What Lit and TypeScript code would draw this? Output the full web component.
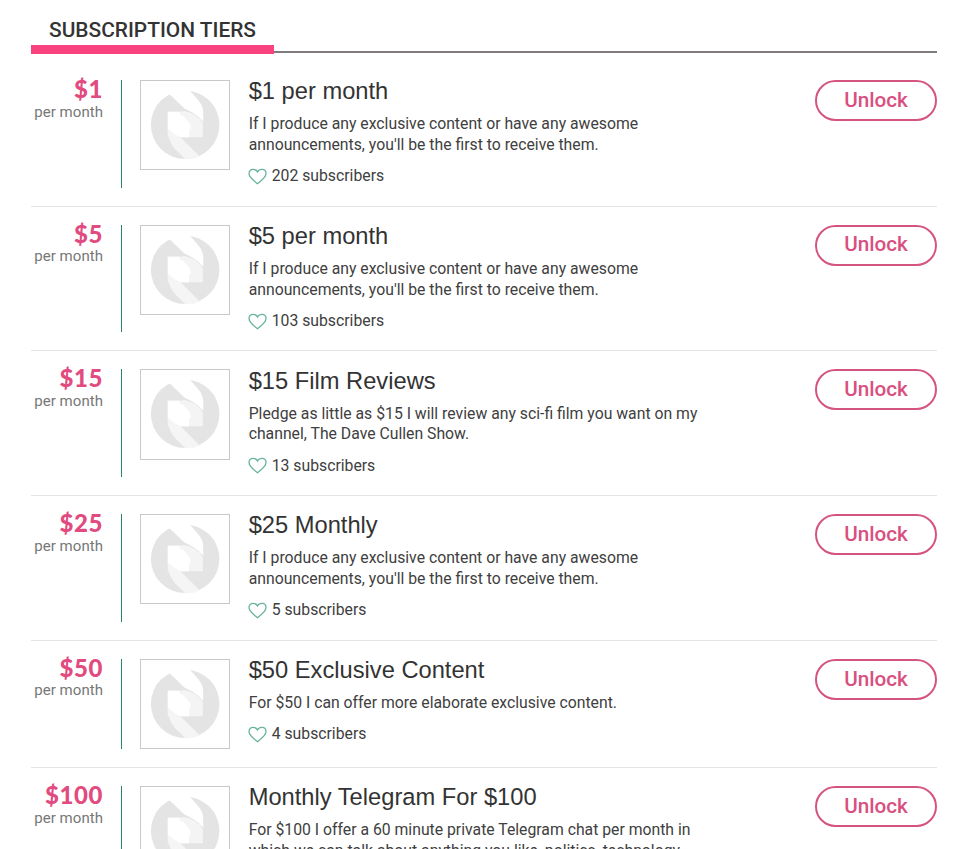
import { LitElement, html, svg, css } from "lit";
import { customElement, property } from "lit/decorators.js";

interface Tier {
  price: string;
  title: string;
  lines: string[];
  subscribers: number;
}

const EXCLUSIVE = [
  "If I produce any exclusive content or have any awesome",
  "announcements, you'll be the first to receive them.",
];

const TIERS: Tier[] = [
  { price: "$1", title: "$1 per month", lines: EXCLUSIVE, subscribers: 202 },
  { price: "$5", title: "$5 per month", lines: EXCLUSIVE, subscribers: 103 },
  {
    price: "$15",
    title: "$15 Film Reviews",
    lines: ["Pledge as little as $15 I will review any sci-fi film you want on my", "channel, The Dave Cullen Show."],
    subscribers: 13,
  },
  { price: "$25", title: "$25 Monthly", lines: EXCLUSIVE, subscribers: 5 },
  { price: "$50", title: "$50 Exclusive Content", lines: ["For $50 I can offer more elaborate exclusive content."], subscribers: 4 },
  {
    price: "$100",
    title: "Monthly Telegram For $100",
    lines: ["For $100 I offer a 60 minute private Telegram chat per month in", "which we can talk about anything you like, politics, technology,"],
    subscribers: 1,
  },
];

const logo = svg`
  <circle cx="150" cy="149" r="102.5" fill="#e4e4e4"/>
  <path d="M100 54L158 40L188 74Q204 92 204 112V140Q192 124 172 112L148 100L108 62Z" fill="#fff"/>
  <path d="M98 110H134L148 108Q188 116 203 144V186H98Z" fill="#f4f4f4"/>
  <path d="M98 110H134V118L144 122L166 148V163H162V186H138Q116 182 98 164Z" fill="#fff"/>
  <path d="M98 160Q116 178 136 186L194 244Q174 254 150 251.500L118 220Q98 196 98 160Z" fill="#f5f5f5"/>`;

@customElement("tier-row")
export class TierRow extends LitElement {
  @property({ attribute: false }) tier!: Tier;

  static styles = css`
    :host {
      display: flex;
      padding: 18px 0;
      border-bottom: 1px solid #e4e4e4;
      color: #404040;
    }
    .price {
      box-sizing: border-box;
      width: 91px;
      padding-right: 18px;
      border-right: 1px solid #2c8468;
      text-align: right;
      white-space: nowrap;
      flex: none;
    }
    .amount {
      color: #e14b7f;
      font: 900 24px/17px Lato, sans-serif;
      letter-spacing: 0.6px;
    }
    .period {
      margin-top: 4.500px;
      color: #777;
      font: 400 15px/20px Roboto, sans-serif;
      letter-spacing: 0.050px;
    }
    .thumb {
      box-sizing: border-box;
      width: 90.300px;
      height: 90.300px;
      margin: 0 18.200px;
      border: 1px solid #c9c9c9;
      flex: none;
    }
    .thumb svg {
      display: block;
      width: 100%;
      height: 100%;
    }
    .info {
      flex: 1;
      min-height: 90.300px;
      font-family: Roboto, sans-serif;
      font-size: 15.780px;
      line-height: 20.800px;
      white-space: nowrap;
    }
    .full {
      min-height: 107.700px;
    }
    .title {
      margin: 0 0 12px;
      padding-top: 0.300px;
      color: #333;
      font: 400 23.700px/22px "Liberation Sans", Arial, sans-serif;
    }
    .subs {
      display: flex;
      align-items: center;
      gap: 5px;
      margin-top: 10.300px;
    }
    .heart {
      width: 19px;
      height: 17px;
      margin-left: -1px;
      fill: none;
      stroke: #68b3a0;
      stroke-width: 1.3;
    }
    .unlock {
      box-sizing: border-box;
      width: 122px;
      height: 41px;
      padding: 0 0 0.500px;
      border: 2px solid #d5547f;
      border-radius: 21px;
      background: #fff;
      color: #d9507f;
      font: 500 20.700px/35px Roboto, sans-serif;
      flex: none;
    }
  `;

  render() {
    const t = this.tier;
    return html`
      <div class="price">
        <div class="amount">${t.price}</div>
        <div class="period">per month</div>
      </div>
      <div class="thumb"><svg viewBox="18 18 264 264">${logo}</svg></div>
      <div class="info ${t.lines.length > 1 ? "full" : ""}">
        <h3 class="title">${t.title}</h3>
        ${t.lines.map((l) => html`<div>${l}</div>`)}
        <div class="subs">
          <svg class="heart" viewBox="0 0 19 17">
            <path d="M9.500 15.700C6.500 13.200 1 9.600 1 5.500C1 3 2.800 1.400 5 1.400C7 1.400 8.600 2.300 9.500 3.900C10.400 2.300 12 1.400 14 1.400C16.200 1.400 18 3 18 5.500C18 9.600 12.500 13.200 9.500 15.700Z"/>
          </svg>
          <span>${t.subscribers} subscribers</span>
        </div>
      </div>
      <button class="unlock">Unlock</button>
    `;
  }
}

@customElement("app-root")
export class AppRoot extends LitElement {
  static styles = css`
    :host {
      display: block;
      box-sizing: border-box;
      height: 849px;
      padding: 0 32px 0 31px;
      overflow: hidden;
      background: #fff;
    }
    .head {
      display: flex;
      height: 53px;
      margin-bottom: 9px;
      background: linear-gradient(#807c7e, #807c7e) 0 51px / 100% 2px no-repeat;
    }
    .tab {
      box-sizing: border-box;
      width: 243px;
      height: 54px;
      margin: 0;
      padding: 15px 0 0 18px;
      border-bottom: 9px solid #f8437f;
      color: #333;
      font: 500 20.900px/30px Roboto, sans-serif;
      white-space: nowrap;
    }
  `;

  render() {
    return html`
      <div class="head"><h2 class="tab">SUBSCRIPTION TIERS</h2></div>
      ${TIERS.map((t) => html`<tier-row .tier=${t}></tier-row>`)}
    `;
  }
}
